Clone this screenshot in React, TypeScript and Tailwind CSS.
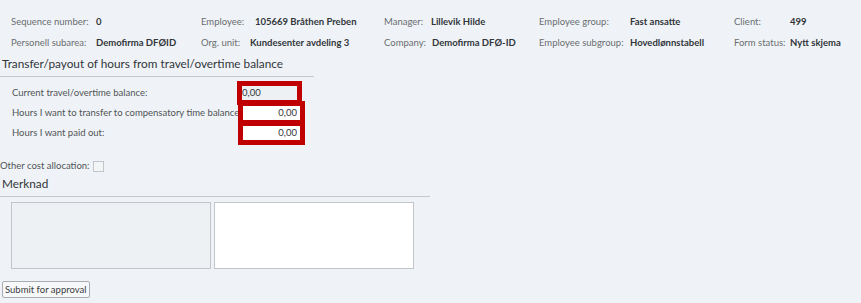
const font = "font-['Lato','Liberation_Sans',Arial,sans-serif]";

function Label({ text, w }: { text: string; w: string }) {
  return <div className={`${w} shrink-0 text-[#6a6d70] whitespace-nowrap`}>{text}</div>;
}

function Value({ text, w }: { text: string; w?: string }) {
  return <div className={`${w ?? ""} shrink-0 font-bold text-[#32363a] whitespace-nowrap`}>{text}</div>;
}

export default function App() {
  return (
    <div className={`w-[861px] h-[303px] overflow-hidden bg-[#eff3f7] text-[9.5px] ${font}`}>
      {/* header info */}
      <div className="pt-[12px] pl-[11px]">
        <div className="flex items-center h-[21px]">
          <Label text="Sequence number:" w="w-[85px]" />
          <Value text="0" w="w-[105px]" />
          <Label text="Employee:" w="w-[54px]" />
          <Value text="105669 Bråthen Preben" w="w-[129px]" />
          <Label text="Manager:" w="w-[47px]" />
          <Value text="Lillevik Hilde" w="w-[108px]" />
          <Label text="Employee group:" w="w-[91px]" />
          <Value text="Fast ansatte" w="w-[104px]" />
          <Label text="Client:" w="w-[56px]" />
          <Value text="499" />
        </div>
        <div className="flex items-center h-[21px]">
          <Label text="Personell subarea:" w="w-[85px]" />
          <Value text="Demofirma DFØID" w="w-[105px]" />
          <Label text="Org. unit:" w="w-[49px]" />
          <Value text="Kundesenter avdeling 3" w="w-[134px]" />
          <Label text="Company:" w="w-[48px]" />
          <Value text="Demofirma DFØ-ID" w="w-[107px]" />
          <Label text="Employee subgroup:" w="w-[91px]" />
          <Value text="Hovedlønnstabell" w="w-[104px]" />
          <Label text="Form status:" w="w-[56px]" />
          <Value text="Nytt skjema" />
        </div>
      </div>

      {/* transfer section */}
      <div className="w-[314px] h-[23px] border-b border-[#c4c8cc] pl-[2px] text-[11.8px] leading-[20px] text-[#32363a] whitespace-nowrap">
        Transfer/payout of hours from travel/overtime balance
      </div>

      <div className="pt-[6px] text-[#515456]">
        <div className="flex items-center h-[20px]">
          <div className="w-[242px] pl-[12px] whitespace-nowrap">Current travel/overtime balance:</div>
          <input
            readOnly
            value="0,00"
            className="w-[55px] h-[14px] bg-[#eef1f4] text-[#32363a] text-left outline-[5px] outline-solid outline-[#c00000]"
          />
        </div>
        <div className="flex items-center h-[20px]">
          <div className="w-[243px] pl-[12px] whitespace-nowrap">Hours I want to transfer to compensatory time balance:</div>
          <input
            readOnly
            value="0,00"
            className="w-[57px] h-[14px] bg-white text-[#32363a] text-right pr-[3px] outline-[5px] outline-solid outline-[#c00000]"
          />
        </div>
        <div className="flex items-center h-[20px]">
          <div className="w-[243px] pl-[12px] whitespace-nowrap">Hours I want paid out:</div>
          <input
            readOnly
            value="0,00"
            className="w-[57px] h-[14px] bg-white text-[#32363a] text-right pr-[3px] outline-[5px] outline-solid outline-[#c00000]"
          />
        </div>
      </div>

      <div className="mt-[16px] flex items-center h-[14px] text-[#515456]">
        <span className="whitespace-nowrap">Other cost allocation:</span>
        <span className="ml-[3px] w-[11px] h-[11px] border border-[#c2c6ca] bg-[#f2f4f6]" />
      </div>

      {/* merknad */}
      <div className="w-[430px] h-[24px] border-b border-[#c4c8cc] pl-[2px] text-[11.8px] leading-[22px] text-[#32363a]">
        Merknad
      </div>
      <div className="mt-[5px] pl-[11px] flex gap-[3px]">
        <textarea readOnly className="w-[200px] h-[67px] resize-none border border-[#c2c6ca] bg-[#eef1f4]" />
        <textarea readOnly className="w-[200px] h-[67px] resize-none border border-[#c2c6ca] bg-white" />
      </div>

      <button className="mt-[12px] ml-[2px] h-[17px] px-[2px] border border-[#a9adb1] rounded-[2px] bg-[#f7f8f9] text-[9.5px] leading-[15px] text-[#3a3d40]">
        Submit for approval
      </button>
    </div>
  );
}
